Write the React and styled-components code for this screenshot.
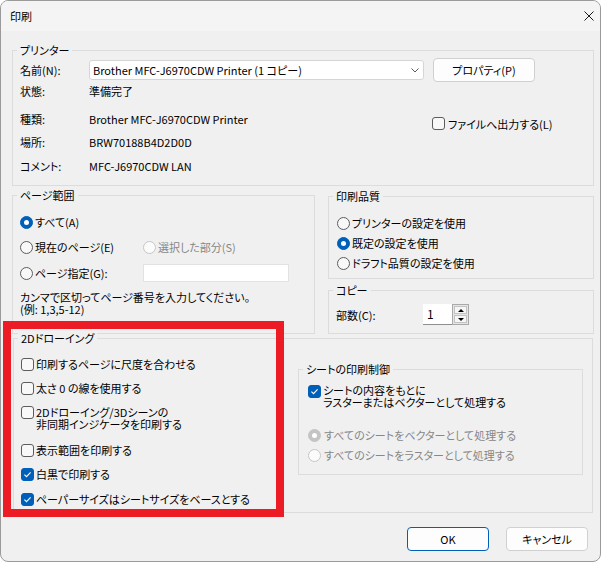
import React from "react";
import styled, { createGlobalStyle } from "styled-components";

const GlobalStyle = createGlobalStyle`
  html, body { margin: 0; padding: 0; background: #ffffff; }
  body { font-family: "Noto Sans CJK JP", "Noto Sans", sans-serif; font-size: 11px; color: #000; }
  *, *::before, *::after { box-sizing: border-box; }
`;

const Window = styled.div`
  position: relative;
  width: 601px;
  height: 562px;
  border: 1px solid #9a9a9a;
  border-radius: 8px;
  background: #f0f0f0;
  overflow: hidden;
  font-family: "Noto Sans CJK JP", "Noto Sans", sans-serif;
  font-size: 11px;
  line-height: 16px;
  font-feature-settings: "palt" 1;
  color: #000;
`;

const TitleBar = styled.div`
  height: 30px;
  display: flex;
  align-items: center;
  padding: 0 6px 0 9px;
  background: #f4f4f4;
`;

const Title = styled.span`
  font-size: 11px;
`;

const CloseIcon = styled.svg`
  margin-left: auto;
  width: 10px;
  height: 10px;
  display: block;
`;

const Body = styled.div`
  display: flex;
  flex-direction: column;
  padding: 19px 6px 0 11px;
`;

const Group = styled.div`
  position: relative;
  border: 1px solid #dcdcdc;
`;

const Legend = styled.span`
  position: absolute;
  top: -9px;
  left: 4px;
  padding: 0 3px;
  background: #f0f0f0;
  line-height: 16px;
  white-space: nowrap;
`;

/* ---------- printer ---------- */
const PrinterGroup = styled(Group)`
  height: 136px;
  padding: 7px 0 0 7px;
`;

const NameRow = styled.div`
  display: flex;
  align-items: center;
  height: 24px;
`;

const InfoRow = styled.div`
  display: flex;
  align-items: center;
  height: 18px;
  margin-top: ${(p) => p.$mt || 0}px;
`;

const FieldLabel = styled.span`
  width: 69px;
  flex-shrink: 0;
  white-space: nowrap;
`;

const InfoValue = styled.span`
  width: 343px;
  flex-shrink: 0;
  white-space: nowrap;
`;

const Combo = styled.div`
  width: 335px;
  height: 20px;
  background: #ffffff;
  border: 1px solid #d5d5d5;
  border-radius: 3px;
  display: flex;
  align-items: center;
  padding: 0 4px 0 3px;
  white-space: nowrap;
`;

const Chevron = styled.svg`
  margin-left: auto;
  width: 8px;
  height: 5px;
  display: block;
`;

const PushButton = styled.button`
  width: ${(p) => p.$w}px;
  height: 24px;
  margin-left: ${(p) => p.$ml || 0}px;
  padding: 0;
  background: #fdfdfd;
  border: 1px solid ${(p) => (p.$default ? "#005fb8" : "#d0d0d0")};
  border-radius: 4px;
  font: inherit;
  font-feature-settings: "palt" 1;
  color: #000;
  line-height: 16px;
`;

/* ---------- checkbox / radio ---------- */
const CheckField = styled.label`
  display: flex;
  align-items: flex-start;
  gap: ${(p) => p.$gap ?? 2}px;
  margin-top: ${(p) => p.$mt || 0}px;
  white-space: nowrap;
  color: ${(p) => (p.$disabled ? "#878787" : "#000")};
`;

const Box = styled.span`
  width: 13px;
  height: 13px;
  margin-top: ${(p) => p.$top ?? 2}px;
  flex-shrink: 0;
  border-radius: 3px;
  display: flex;
  align-items: center;
  justify-content: center;
  border: 1px solid ${(p) => (p.$checked ? "#005fb8" : "#5c5c5c")};
  background: ${(p) => (p.$checked ? "#005fb8" : "#f8f8f8")};
`;

const CheckText = styled.span`
  line-height: ${(p) => p.$lh || 16}px;
  padding-top: ${(p) => p.$pt || 0}px;
`;

const Radio = styled.span`
  position: relative;
  width: 13px;
  height: 13px;
  flex-shrink: 0;
  border-radius: 50%;
  border: 1px solid
    ${(p) =>
      p.$disabled ? (p.$checked ? "#c4c4c4" : "#c6c6c6") : p.$checked ? "#005fb8" : "#5c5c5c"};
  background: ${(p) =>
    p.$disabled ? (p.$checked ? "#c4c4c4" : "#fbfbfb") : p.$checked ? "#005fb8" : "#f8f8f8"};
  &::after {
    content: "";
    display: ${(p) => (p.$checked ? "block" : "none")};
    position: absolute;
    top: 3px;
    left: 3px;
    width: 5px;
    height: 5px;
    border-radius: 50%;
    background: #ffffff;
  }
`;

const RadioOption = styled.label`
  display: flex;
  align-items: center;
  gap: ${(p) => p.$gap ?? 2}px;
  height: 16px;
  white-space: nowrap;
  color: ${(p) => (p.$disabled ? "#878787" : "#000")};
`;

const CheckMark = () => (
  <svg width="11" height="11" viewBox="0 0 11 11">
    <path d="M2.4 5.7 L4.5 7.7 L8.6 3.3" fill="none" stroke="#ffffff" strokeWidth="1.1" />
  </svg>
);

const Checkbox = ({ checked, top }) => (
  <Box $checked={checked} $top={top}>
    {checked && <CheckMark />}
  </Box>
);

/* ---------- middle ---------- */
const MiddleRow = styled.div`
  display: flex;
  gap: 13px;
  margin-top: 9px;
`;

const PageRangeGroup = styled(Group)`
  width: 303px;
  height: 139px;
  padding: 18px 0 0 7px;
  display: flex;
  flex-direction: column;
  gap: 9px;
`;

const RangeRow = styled.div`
  display: grid;
  grid-template-columns: 123px 146px;
  align-items: center;
`;

const TextInput = styled.div`
  width: 146px;
  height: 18px;
  background: #ffffff;
  border: 1px solid #e2e2e2;
`;

const HelpText = styled.div`
  line-height: 12px;
  white-space: nowrap;
`;

const RightColumn = styled.div`
  flex: 1;
  display: flex;
  flex-direction: column;
  gap: 11px;
  padding-top: 1px;
`;

const QualityGroup = styled(Group)`
  height: 83px;
  padding: 18px 0 0 8px;
  display: flex;
  flex-direction: column;
  gap: 4px;
`;

const CopyGroup = styled(Group)`
  height: 44px;
  padding: 13px 0 0 7px;
  display: flex;
  align-items: flex-start;
`;

const CopyRow = styled.div`
  display: flex;
  align-items: center;
  height: 21px;
`;

const CopyLabel = styled.span`
  width: 87px;
  white-space: nowrap;
`;

const SpinInput = styled.div`
  width: 29px;
  height: 21px;
  background: #ffffff;
  border-bottom: 1px solid #8f8f8f;
  padding: 2px 0 0 4px;
  line-height: 16px;
  font-size: 12px;
`;

const SpinFrame = styled.div`
  width: 17px;
  height: 21px;
  border: 1px solid #a9a9a9;
  background: #e6e6e6;
  display: flex;
  flex-direction: column;
  gap: 1px;
  padding: 1px;
`;

const SpinButton = styled.div`
  flex: 1;
  background: #f6f6f6;
  border: 1px solid #c3c3c3;
  display: flex;
  align-items: center;
  justify-content: center;
  &::after {
    content: "";
    width: 0;
    height: 0;
    border-left: 3px solid transparent;
    border-right: 3px solid transparent;
    ${(p) => (p.$down ? "border-top: 3px solid #000;" : "border-bottom: 3px solid #000;")}
  }
`;

/* ---------- 2D drawing ---------- */
const DrawingGroup = styled(Group)`
  height: 175px;
  margin: 4px 1px 0 1px;
  padding: 17px 9px 0 7px;
  display: flex;
  align-items: flex-start;
  justify-content: space-between;
`;

const CheckList = styled.div`
  display: flex;
  flex-direction: column;
`;

const SheetGroup = styled(Group)`
  width: 285px;
  margin-top: 13px;
  padding: 14px 0 11px 9px;
  display: flex;
  flex-direction: column;
`;

const SheetRadios = styled.div`
  display: flex;
  flex-direction: column;
  gap: 4px;
  margin-top: 19px;
`;

const ButtonRow = styled.div`
  display: flex;
  justify-content: flex-end;
  gap: 17px;
  margin-top: 14px;
  padding-right: 6px;
`;

const Highlight = styled.div`
  position: absolute;
  left: 2px;
  top: 320px;
  width: 281px;
  height: 196px;
  border: 8px solid #ed1c24;
  pointer-events: none;
`;

const drawingItems = [
  { text: ["印刷するページに尺度を合わせる"], mt: 0 },
  { text: ["太さ 0 の線を使用する"], mt: 8 },
  { text: ["2Dドローイング/3Dシーンの", "非同期インジケータを印刷する"], mt: 8 },
  { text: ["表示範囲を印刷する"], mt: 12 },
  { text: ["白黒で印刷する"], mt: 8, checked: true },
  { text: ["ペーパーサイズはシートサイズをベースとする"], mt: 9, checked: true },
];

export default function App() {
  return (
    <>
      <GlobalStyle />
      <Window>
        <TitleBar>
          <Title>印刷</Title>
          <CloseIcon viewBox="0 0 10 10">
            <path d="M0.5 0.5 L9.5 9.5 M9.5 0.5 L0.5 9.5" stroke="#1a1a1a" strokeWidth="1" fill="none" />
          </CloseIcon>
        </TitleBar>
        <Body>
          <PrinterGroup>
            <Legend>プリンター</Legend>
            <NameRow>
              <FieldLabel>名前(N):</FieldLabel>
              <Combo>
                Brother MFC-J6970CDW Printer (1 コピー)
                <Chevron viewBox="0 0 8 5">
                  <path d="M0.5 0.5 L4 4 L7.5 0.5" stroke="#5a5a5a" strokeWidth="1" fill="none" />
                </Chevron>
              </Combo>
              <PushButton $w={102} $ml={9}>プロパティ(P)</PushButton>
            </NameRow>
            <InfoRow>
              <FieldLabel>状態:</FieldLabel>
              <InfoValue>準備完了</InfoValue>
            </InfoRow>
            <InfoRow $mt={10}>
              <FieldLabel>種類:</FieldLabel>
              <InfoValue>Brother MFC-J6970CDW Printer</InfoValue>
              <CheckField $mt={9} $gap={3}>
                <Checkbox checked={false} top={1} />
                <CheckText>ファイルへ出力する(L)</CheckText>
              </CheckField>
            </InfoRow>
            <InfoRow $mt={5}>
              <FieldLabel>場所:</FieldLabel>
              <InfoValue>BRW70188B4D2D0D</InfoValue>
            </InfoRow>
            <InfoRow $mt={6}>
              <FieldLabel>コメント:</FieldLabel>
              <InfoValue>MFC-J6970CDW LAN</InfoValue>
            </InfoRow>
          </PrinterGroup>

          <MiddleRow>
            <PageRangeGroup>
              <Legend>ページ範囲</Legend>
              <RangeRow>
                <RadioOption>
                  <Radio $checked />
                  すべて(A)
                </RadioOption>
              </RangeRow>
              <RangeRow>
                <RadioOption>
                  <Radio />
                  現在のページ(E)
                </RadioOption>
                <RadioOption $disabled>
                  <Radio $disabled />
                  選択した部分(S)
                </RadioOption>
              </RangeRow>
              <RangeRow>
                <RadioOption>
                  <Radio />
                  ページ指定(G):
                </RadioOption>
                <TextInput />
              </RangeRow>
              <HelpText>
                カンマで区切ってページ番号を入力してください。
                <br />
                (例: 1,3,5-12)
              </HelpText>
            </PageRangeGroup>

            <RightColumn>
              <QualityGroup>
                <Legend>印刷品質</Legend>
                <RadioOption>
                  <Radio />
                  プリンターの設定を使用
                </RadioOption>
                <RadioOption>
                  <Radio $checked />
                  既定の設定を使用
                </RadioOption>
                <RadioOption>
                  <Radio />
                  ドラフト品質の設定を使用
                </RadioOption>
              </QualityGroup>
              <CopyGroup>
                <Legend>コピー</Legend>
                <CopyRow>
                  <CopyLabel>部数(C):</CopyLabel>
                  <SpinInput>1</SpinInput>
                  <SpinFrame>
                    <SpinButton />
                    <SpinButton $down />
                  </SpinFrame>
                </CopyRow>
              </CopyGroup>
            </RightColumn>
          </MiddleRow>

          <DrawingGroup>
            <Legend>2Dドローイング</Legend>
            <CheckList>
              {drawingItems.map((it, i) => (
                <CheckField key={i} $mt={it.mt}>
                  <Checkbox checked={!!it.checked} />
                  {it.text.length > 1 ? (
                    <CheckText $lh={12} $pt={2}>
                      {it.text[0]}
                      <br />
                      {it.text[1]}
                    </CheckText>
                  ) : (
                    <CheckText>{it.text[0]}</CheckText>
                  )}
                </CheckField>
              ))}
            </CheckList>
            <SheetGroup>
              <Legend>シートの印刷制御</Legend>
              <CheckField>
                <Checkbox checked top={1} />
                <CheckText $lh={12}>
                  シートの内容をもとに
                  <br />
                  ラスターまたはベクターとして処理する
                </CheckText>
              </CheckField>
              <SheetRadios>
                <RadioOption $disabled $gap={3}>
                  <Radio $disabled $checked />
                  すべてのシートをベクターとして処理する
                </RadioOption>
                <RadioOption $disabled $gap={3}>
                  <Radio $disabled />
                  すべてのシートをラスターとして処理する
                </RadioOption>
              </SheetRadios>
            </SheetGroup>
          </DrawingGroup>

          <ButtonRow>
            <PushButton $w={82} $default>OK</PushButton>
            <PushButton $w={82}>キャンセル</PushButton>
          </ButtonRow>
        </Body>
        <Highlight />
      </Window>
    </>
  );
}
